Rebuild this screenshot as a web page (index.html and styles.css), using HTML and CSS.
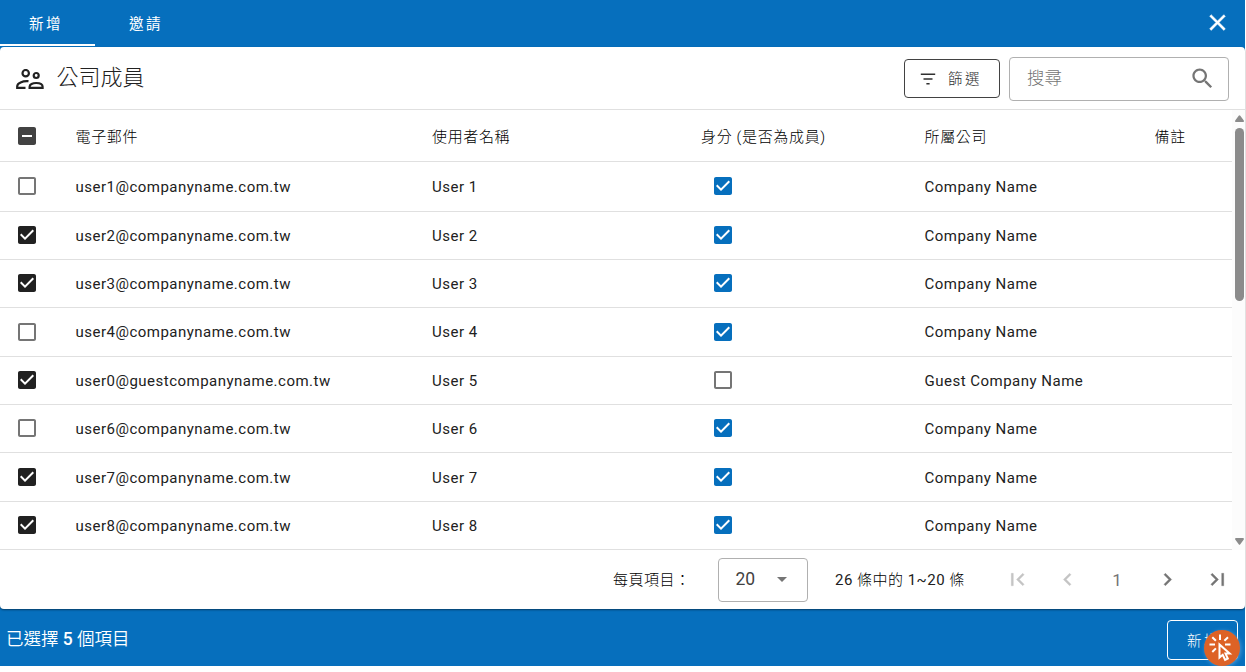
FILE: index.html
```html
<!DOCTYPE html>
<html lang="zh-Hant">
<head>
<meta charset="utf-8">
<title>公司成員</title>
<link rel="stylesheet" href="styles.css">
</head>
<body>
<svg class="sprite" aria-hidden="true">
  <symbol id="off" viewBox="0 0 24 24"><path d="M19 5v14H5V5h14m0-2H5c-1.1 0-2 .9-2 2v14c0 1.1.9 2 2 2h14c1.1 0 2-.9 2-2V5c0-1.1-.9-2-2-2z"/></symbol>
  <symbol id="on" viewBox="0 0 24 24"><path d="M19 3H5c-1.11 0-2 .9-2 2v14c0 1.1.89 2 2 2h14c1.11 0 2-.9 2-2V5c0-1.1-.89-2-2-2zm-9 14l-5-5 1.41-1.41L10 14.17l7.59-7.59L19 8l-9 9z"/></symbol>
  <symbol id="some" viewBox="0 0 24 24"><path d="M19 3H5c-1.1 0-2 .9-2 2v14c0 1.1.9 2 2 2h14c1.1 0 2-.9 2-2V5c0-1.1-.9-2-2-2zm-2 10H7v-2h10v2z"/></symbol>
</svg>
<div class="dialog">
  <header class="tabs">
    <div class="tab tab-active">新增</div>
    <div class="tab">邀請</div>
    <svg class="close" viewBox="0 0 24 24"><path d="M19 6.41L17.59 5 12 10.59 6.41 5 5 6.41 10.59 12 5 17.59 6.41 19 12 13.41 17.59 19 19 17.59 13.41 12z"/></svg>
  </header>
  <main class="panel">
    <div class="toolbar">
      <svg class="people" viewBox="0 0 28 20"><g fill="none" stroke="currentColor" stroke-width="2.200"><circle cx="9.700" cy="4.200" r="3.200"/><circle cx="20.200" cy="6.500" r="2.500"/><path d="M12.500 12.200C6.500 11.700 1.200 14.200 1.200 17.200V18.900H9.500M13.600 18.900V17.700C13.600 15.300 16.600 14 20.200 14S26.600 15.300 26.600 17.700V18.900z"/></g></svg>
      <h1 class="title">公司成員</h1>
      <button class="filter"><svg viewBox="0 0 20 20"><path d="M2 4.700h16M5 10h10M8.200 15.300h3.600" stroke="currentColor" stroke-width="1.800"/></svg><span>篩選</span></button>
      <div class="search"><span>搜尋</span><svg viewBox="0 0 24 24"><path d="M15.500 14h-.79l-.28-.27C15.410 12.590 16 11.110 16 9.500 16 5.910 13.090 3 9.500 3S3 5.910 3 9.500 5.910 16 9.500 16c1.610 0 3.090-.59 4.230-1.570l.27.28v.79l5 4.990L20.490 19l-4.990-5zm-6 0C7.010 14 5 11.990 5 9.500S7.010 5 9.500 5 14 7.010 14 9.500 11.990 14 9.500 14z"/></svg></div>
    </div>
    <div class="table-wrap">
      <div class="table">
        <div class="row head"><svg class="box some"><use href="#some"/></svg><span>電子郵件</span><span>使用者名稱</span><span>身分 (是否為成員)</span><span>所屬公司</span><span>備註</span></div>
        <div class="row"><svg class="box off"><use href="#off"/></svg><span>user1@companyname.com.tw</span><span>User 1</span><svg class="box member"><use href="#on"/></svg><span>Company Name</span></div>
        <div class="row"><svg class="box on"><use href="#on"/></svg><span>user2@companyname.com.tw</span><span>User 2</span><svg class="box member"><use href="#on"/></svg><span>Company Name</span></div>
        <div class="row"><svg class="box on"><use href="#on"/></svg><span>user3@companyname.com.tw</span><span>User 3</span><svg class="box member"><use href="#on"/></svg><span>Company Name</span></div>
        <div class="row"><svg class="box off"><use href="#off"/></svg><span>user4@companyname.com.tw</span><span>User 4</span><svg class="box member"><use href="#on"/></svg><span>Company Name</span></div>
        <div class="row"><svg class="box on"><use href="#on"/></svg><span>user0@guestcompanyname.com.tw</span><span>User 5</span><svg class="box member off"><use href="#off"/></svg><span>Guest Company Name</span></div>
        <div class="row"><svg class="box off"><use href="#off"/></svg><span>user6@companyname.com.tw</span><span>User 6</span><svg class="box member"><use href="#on"/></svg><span>Company Name</span></div>
        <div class="row low"><svg class="box on"><use href="#on"/></svg><span>user7@companyname.com.tw</span><span>User 7</span><svg class="box member"><use href="#on"/></svg><span>Company Name</span></div>
        <div class="row"><svg class="box on"><use href="#on"/></svg><span>user8@companyname.com.tw</span><span>User 8</span><svg class="box member"><use href="#on"/></svg><span>Company Name</span></div>
      </div>
      <div class="scrollbar">
        <svg class="arrow" viewBox="0 0 9 7"><path d="M3.700.8Q4.500-.4 5.300.8L8.800 5.500Q9.200 7 8 7H1Q-.2 7 .2 5.500z"/></svg>
        <div class="thumb"></div>
        <svg class="arrow arrow-down" viewBox="0 0 9 7"><path d="M3.700.8Q4.500-.4 5.300.8L8.800 5.500Q9.200 7 8 7H1Q-.2 7 .2 5.500z"/></svg>
      </div>
    </div>
    <div class="pager">
      <span class="per-page">每頁項目：</span>
      <div class="select"><span>20</span><svg viewBox="0 0 10 5"><path d="M0 0h10L5 5z"/></svg></div>
      <span class="range"><b>26</b> 條中的 <b>1~20</b> 條</span>
      <nav class="pages">
        <svg class="dim" viewBox="0 0 24 24"><path d="M18.410 16.590L13.820 12l4.590-4.590L17 6l-6 6 6 6zM6 6h2v12H6z"/></svg>
        <svg class="dim" viewBox="0 0 24 24"><path d="M15.410 7.410L14 6l-6 6 6 6 1.410-1.410L10.830 12z"/></svg>
        <span>1</span>
        <svg viewBox="0 0 24 24"><path d="M8.590 16.590L13.170 12 8.590 7.410 10 6l6 6-6 6z"/></svg>
        <svg viewBox="0 0 24 24"><path d="M5.590 7.410L10.180 12l-4.590 4.590L7 18l6-6-6-6zM16 6h2v12h-2z"/></svg>
      </nav>
    </div>
  </main>
  <footer class="footer">
    <span class="selected">已選擇 <b>5</b> 個項目</span>
    <button class="add">新增</button>
    <svg class="click" viewBox="0 0 36 36"><circle cx="18" cy="18" r="18"/><g fill="none" stroke="#fff" stroke-width="2"><path d="M16 4.500v5.500M5.500 14.500H11M21 14.500h5.500M8.300 7.300l3.600 3.500M24 7.300l-3.600 3.500M8.300 22l3.600-3.600"/><path d="M15.500 14.500v13l3.200-2.700 2.400 5 2.700-1.300-2.300-4.900h4.200z"/></g></svg>
  </footer>
</div>
</body>
</html>
```
FILE: styles.css
```css
* { box-sizing: border-box; }
body {
  margin: 0;
  background: #fff;
  color: #212121;
  font: 400 15px/20px Roboto, "Noto Sans CJK TC", sans-serif;
}
svg { display: block; fill: currentColor; flex: none; }
button { font: inherit; background: none; padding: 0; }
.sprite { display: none; }
.dialog {
  width: 1245px;
  height: 666px;
  display: flex;
  flex-direction: column;
  background: #066fbd;
}
.tabs { display: flex; height: 47px; color: #fff; flex: none; }
.tab {
  width: 95px;
  height: 46px;
  padding: 15px 0 0 29px;
  font-size: 14.500px;
  letter-spacing: 2.400px;
  white-space: nowrap;
}
.tab + .tab { margin-left: 5px; }
.tab-active { border-bottom: 2px solid #fff; }
.close { width: 27px; height: 27px; margin: 9px 14px 0 auto; stroke: currentColor; stroke-width: .400px; }

.panel {
  height: 562px;
  display: flex;
  flex-direction: column;
  flex: none;
  background: #fff;
  border-radius: 4px;
  box-shadow: 0 1px 2px rgba(0, 0, 0, .45);
}
.toolbar {
  height: 63px;
  display: flex;
  border-bottom: 1px solid #e0e0e0;
  flex: none;
}
.people { width: 28px; height: 20px; margin: 21.500px 0 0 16px; }
.title {
  margin: 16px auto 0 12.500px;
  font-size: 22px;
  line-height: 30px;
  font-weight: 300;
}
.filter {
  width: 96px;
  height: 39px;
  margin-top: 12px;
  padding-left: 14px;
  display: flex;
  align-items: center;
  gap: 11px;
  border: 1px solid #424242;
  border-radius: 4px;
  color: #303030;
  font-size: 14.500px;
  font-weight: 300;
  letter-spacing: 2.400px;
}
.filter span { padding-top: 2px; }
.filter svg { width: 18px; height: 18px; }
.search {
  width: 220px;
  height: 44px;
  margin: 10px 16px 0 9px;
  padding: 0 12px 2px 17px;
  display: flex;
  align-items: center;
  justify-content: space-between;
  border: 1px solid #b0b0b0;
  border-radius: 4px;
  color: #757575;
  font-size: 17.500px;
  font-weight: 300;
}
.search svg { width: 27px; height: 27px; }

.table-wrap { height: 440px; display: flex; flex: none; }
.table {
  width: 1232px;
  display: grid;
  grid-template-rows: 52px 50px 48px 48px 49px 48px 48px 49px 48px;
}
.row {
  display: grid;
  grid-template-columns: 60.500px 356.500px 269px 223.500px 230px 1fr;
  align-items: center;
  padding-left: 15px;
  border-bottom: 1px solid #e0e0e0;
  letter-spacing: .490px;
}
.low { padding-top: 1px; }
.head { padding-top: 2px; color: #000; font-weight: 300; letter-spacing: .650px; }
.box { width: 24px; height: 24px; margin: -1px 0 0 .300px; color: #212121; }
.some { color: #424242; }
.member { margin-left: 9.800px; color: #066fbd; }
.off { color: #757575; }
.scrollbar {
  width: 13px;
  display: flex;
  flex-direction: column;
  padding: 5px 1px 5px 3px;
  background: #fcfcfc;
  color: #8b8b8b;
}
.arrow { width: 9px; height: 7px; }
.arrow-down { margin-top: auto; transform: rotate(180deg); }
.thumb { height: 173px; margin-top: 6px; border-radius: 5px; background: #8b8b8b; }

.pager { display: flex; align-items: center; height: 59px; }
.per-page { width: 105px; margin-left: 613px; color: #000; font-weight: 300; letter-spacing: .500px; white-space: nowrap; }
.select {
  width: 90px;
  height: 44px;
  padding: 0 20px 2px 17px;
  display: flex;
  align-items: center;
  justify-content: space-between;
  border: 1px solid #b0b0b0;
  border-radius: 4px;
  color: #424242;
  font-size: 17.500px;
}
.select span { margin-left: -.500px; }
.select svg { width: 10px; height: 5px; margin-top: 2px; color: #757575; }
.range { width: 157px; margin-left: 27px; color: #000; font-weight: 300; letter-spacing: .500px; white-space: nowrap; }
.range b { color: #212121; font-weight: 400; }
.pages { display: grid; grid-template-columns: repeat(5, 50px); justify-items: center; align-items: center; color: #757575; font-size: 17px; }
.pages svg { width: 25px; height: 25px; stroke: currentColor; stroke-width: .300px; }
.pages .dim { color: #c4c4c4; }

.footer { position: relative; flex: 1; display: flex; justify-content: space-between; color: #fff; }
.selected { margin: 20px 0 0 6px; font-size: 17.500px; font-weight: 350; }
.selected b { font-weight: 500; }
.add {
  width: 71px;
  height: 40px;
  margin: 11px 7px 0 0;
  padding: 3px 0 0 3px;
  border: 1px solid #fff;
  border-radius: 4px;
  color: #fff;
  font-size: 14.500px;
  font-weight: 300;
  letter-spacing: 2.400px;
}
.click {
  position: absolute;
  right: 5px;
  top: 21px;
  width: 36px;
  height: 36px;
  color: #dd6226;
  filter: drop-shadow(1px 1px 2px rgba(120, 180, 230, .6));
}
```
